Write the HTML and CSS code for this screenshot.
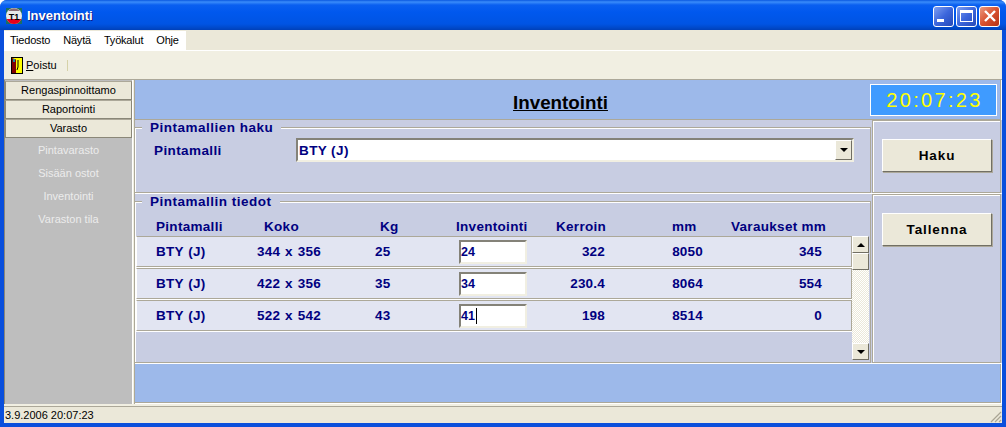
FILE: index.html
```html
<!DOCTYPE html>
<html lang="fi">
<head>
    <meta charset="UTF-8">
    <title>Inventointi</title>
    <link rel="stylesheet" href="styles.css">
</head>
<body>
<div class="window">
    <div class="titlebar">
        <svg class="app-icon" width="16" height="16" viewBox="0 0 16 16">
            <rect x="0" y="0" width="16" height="16" fill="#1c6e62"/>
            <circle cx="8" cy="8" r="8" fill="#e8e8e8"/>
            <path d="M0.6 11 H15.4 A8 8 0 0 1 0.6 11 Z" fill="#e8001c"/>
            <path d="M2 3 A8 8 0 0 1 14 3 Z" fill="#8a6a70"/>
            <text x="8" y="11.5" text-anchor="middle" class="app-icon-text">T1</text>
        </svg>
        <span class="title">Inventointi</span>
        <div class="win-buttons">
            <div class="win-btn"><span class="glyph-min"></span></div>
            <div class="win-btn"><span class="glyph-max"></span></div>
            <div class="win-btn win-close">
                <svg width="12" height="12" viewBox="0 0 12 12"><path d="M1 1 L11 11 M11 1 L1 11" stroke="#fff" stroke-width="2.4"/></svg>
            </div>
        </div>
    </div>

    <div class="client">
        <div class="menubar">
            <div class="menu">
                <span>Tiedosto</span><span>Näytä</span><span>Työkalut</span><span>Ohje</span>
            </div>
        </div>
        <div class="toolbar">
            <svg width="12" height="17" viewBox="0 0 12 17">
                <rect x="0.5" y="0.5" width="11" height="16" fill="#ffff00" stroke="#000"/>
                <path d="M1 1 L5 2.5 V16 H1 Z" fill="#800000"/>
                <rect x="2" y="2" width="2" height="3" fill="#1f8a9e"/>
                <path d="M7 3 V10 L6 13" stroke="#000" fill="none"/>
            </svg>
            <span class="tool-label"><u>P</u>oistu</span>
            <span class="tool-sep"></span>
        </div>

        <div class="workspace">
            <div class="sidebar">
                <div class="nav-btn">Rengaspinnoittamo</div>
                <div class="nav-btn">Raportointi</div>
                <div class="nav-btn">Varasto</div>
                <div class="nav-links">
                    <span>Pintavarasto</span>
                    <span>Sisään ostot</span>
                    <span>Inventointi</span>
                    <span>Varaston tila</span>
                </div>
            </div>

            <div class="main">
                <div class="header">
                    <h1>Inventointi</h1>
                    <div class="clock">20:07:23</div>
                </div>

                <div class="band band-search">
                    <fieldset class="group">
                        <legend>Pintamallien haku</legend>
                        <div class="search-row">
                            <label class="search-label">Pintamalli</label>
                            <div class="combo">
                                <span class="combo-value">BTY (J)</span>
                                <span class="arrow-btn"><i class="tri-down"></i></span>
                            </div>
                        </div>
                    </fieldset>
                    <div class="side-panel"><button class="action">Haku</button></div>
                </div>

                <div class="band band-details">
                    <fieldset class="group">
                        <legend>Pintamallin tiedot</legend>
                        <div class="grid-head">
                            <span>Pintamalli</span><span>Koko</span><span>Kg</span><span>Inventointi</span><span>Kerroin</span><span>mm</span><span>Varaukset mm</span>
                        </div>
                        <div class="grid-wrap">
                            <div class="rows">
                                <div class="row">
                                    <span>BTY (J)</span><span>344 x 356</span><span>25</span>
                                    <span class="qty">24</span>
                                    <span class="num">322</span><span class="num">8050</span><span class="num">345</span>
                                </div>
                                <div class="row">
                                    <span>BTY (J)</span><span>422 x 356</span><span>35</span>
                                    <span class="qty">34</span>
                                    <span class="num">230.4</span><span class="num">8064</span><span class="num">554</span>
                                </div>
                                <div class="row">
                                    <span>BTY (J)</span><span>522 x 542</span><span>43</span>
                                    <span class="qty">41<i class="caret"></i></span>
                                    <span class="num">198</span><span class="num">8514</span><span class="num">0</span>
                                </div>
                            </div>
                            <div class="scrollbar">
                                <span class="arrow-btn scroll-btn"><i class="tri-up"></i></span>
                                <span class="arrow-btn thumb"></span>
                                <span class="track"></span>
                                <span class="arrow-btn scroll-btn"><i class="tri-down"></i></span>
                            </div>
                        </div>
                    </fieldset>
                    <div class="side-panel"><button class="action">Tallenna</button></div>
                </div>

                <div class="footer-band"></div>
            </div>
        </div>

        <div class="statusbar">
            <span>3.9.2006 20:07:23</span>
            <svg class="grip" width="12" height="12" viewBox="0 0 12 12">
                <path d="M11 1 L1 11 M11 5 L5 11 M11 9 L9 11" stroke="#a9a594" stroke-width="1.2"/>
            </svg>
        </div>
    </div>
</div>
</body>
</html>
```

FILE: styles.css
```css
body {
    margin: 0;
    background: #fff;
    font-family: 'Liberation Sans', Arial, sans-serif;
    overflow: hidden;
}
.window {
    width: 1006px;
    height: 427px;
    display: flex;
    flex-direction: column;
    background: #0a4fdc;
    border-radius: 7px 7px 0 0;
    overflow: hidden;
}

/* title bar */
.titlebar {
    height: 30px;
    flex: none;
    display: flex;
    align-items: center;
    padding: 0 6px 0 6px;
    box-sizing: border-box;
    background: linear-gradient(to bottom, #0a58e0 0, #3a8cfa 2px, #0a5ff0 5px, #0058ee 12px, #0054e3 24px, #0048c8 28px, #0040b8 30px);
}
.app-icon {
    margin-top: 2px;
}
.app-icon-text {
    font-family: 'Liberation Sans', sans-serif;
    font-size: 9px;
    font-weight: bold;
    fill: #000;
}
.title {
    margin-left: 5px;
    color: #fff;
    font-size: 13px;
    font-weight: bold;
    text-shadow: 1px 1px 0 #0f1f8a;
}
.win-buttons {
    margin-left: auto;
    display: flex;
    gap: 2px;
    margin-top: 2px;
}
.win-btn {
    width: 21px;
    height: 21px;
    box-sizing: border-box;
    border: 1px solid #fff;
    border-radius: 3px;
    background: linear-gradient(135deg, #7f9ff0 0, #3c66dc 50%, #2448b8 100%);
    position: relative;
    display: flex;
    align-items: center;
    justify-content: center;
}
.win-close {
    background: linear-gradient(135deg, #eb9a80 0, #d8512f 50%, #b83214 100%);
}
.glyph-min {
    width: 7px;
    height: 3px;
    background: #fff;
    margin: 8px 6px 0 0;
}
.glyph-max {
    width: 11px;
    height: 8px;
    border: 1px solid #fff;
    border-top-width: 3px;
}

/* menu and toolbar */
.client {
    flex: 1;
    margin: 0 4px 4px;
    display: flex;
    flex-direction: column;
    background: #f1efe2;
    min-height: 0;
}
.menubar {
    height: 20px;
    flex: none;
    background: #ebe8d9;
    border-bottom: 1px solid #fff;
    box-sizing: content-box;
}
.menu {
    display: inline-flex;
    width: 182px;
    height: 19px;
    background: #fff;
    align-items: center;
    padding-left: 6px;
    box-sizing: border-box;
    font-size: 11px;
    letter-spacing: -0.2px;
    color: #000;
    gap: 13px;
}
.toolbar {
    height: 28px;
    flex: none;
    display: flex;
    align-items: center;
    padding-left: 7px;
    font-size: 11px;
}
.tool-label {
    margin-left: 3px;
}
.tool-sep {
    width: 1px;
    height: 11px;
    margin-left: 10px;
    background: #d6d2a8;
}

/* workspace */
.workspace {
    height: 325px;
    flex: none;
    display: flex;
    border-top: 1px solid #aca899;
    box-sizing: border-box;
}
.sidebar {
    width: 129px;
    flex: none;
    background: #bebebe;
    border-left: 1px solid #8a8778;
    border-right: 1px solid #fff;
    padding-top: 1px;
    box-sizing: border-box;
    display: flex;
    flex-direction: column;
}
.nav-btn {
    height: 19px;
    flex: none;
    box-sizing: border-box;
    background: #ebe8d9;
    border: 1px solid #8a8778;
    border-top-color: #aca899;
    font-size: 11px;
    line-height: 17px;
    text-align: center;
    color: #000;
}
.nav-links {
    display: flex;
    flex-direction: column;
    align-items: center;
    gap: 9px;
    padding-top: 5px;
    color: #ececec;
    font-size: 11px;
    line-height: 14px;
}
.main {
    flex: 1;
    margin-left: 1px;
    border-left: 1px solid #aca899;
    display: flex;
    flex-direction: column;
    background: #fff;
}
.header {
    height: 40px;
    flex: none;
    box-sizing: border-box;
    background: #9db9ea;
    border-bottom: 1px solid #aca899;
    border-right: 1px solid #aca899;
    position: relative;
    display: flex;
    align-items: center;
    justify-content: flex-end;
    padding-right: 3px;
    margin-right: 1px;
}
.header h1 {
    position: absolute;
    left: 0;
    right: 14px;
    margin: 0;
    padding-top: 6px;
    text-align: center;
    font-size: 18.8px;
    color: #000;
    text-decoration: underline;
}
.clock {
    width: 127px;
    height: 32px;
    box-sizing: border-box;
    background: #3f9bff;
    border: 1px solid #fff;
    color: #ffff00;
    font-size: 20px;
    letter-spacing: 2.3px;
    text-align: center;
    line-height: 30px;
    padding-left: 2px;
}

/* bands with group boxes */
.band {
    display: flex;
    background: #c8cde2;
    border-bottom: 1px solid #fff;
    flex: none;
}
.band-search {
    height: 73px;
}
.band-details {
    height: 169px;
}
.group {
    margin: 0;
    padding: 0;
    width: 736px;
    flex: none;
    box-sizing: border-box;
    border: 0;
    border-top: 1px solid #aca899;
    border-right: 1px solid #aca899;
    border-bottom: 1px solid #aca899;
    box-shadow: inset 1px 1px 0 #fff;
    min-width: 0;
}
.group legend {
    margin-left: 7px;
    padding: 0 8px;
    background: #c8cde2;
    color: #000080;
    font-size: 13.5px;
    font-weight: bold;
    line-height: 15px;
    letter-spacing: 0.5px;
}
.side-panel {
    flex: 1;
    margin: 0 1px 0 1px;
    box-sizing: border-box;
    border: 1px solid #aca899;
    padding: 18px 0 0 9px;
    box-shadow: inset 1px 1px 0 #fff;
}
.action {
    display: block;
    width: 110px;
    height: 33px;
    padding: 0;
    background: #ebe8d9;
    border: 1px solid;
    border-color: #fff #716f64 #716f64 #fff;
    box-shadow: 1px 1px 0 #aca899;
    font-family: inherit;
    font-size: 13.5px;
    font-weight: bold;
    color: #000;
    letter-spacing: 0.9px;
}

/* search row */
.search-row {
    display: flex;
    align-items: center;
    padding: 3px 0 0 19px;
}
.search-label {
    width: 142px;
    color: #000080;
    font-size: 13.5px;
    font-weight: bold;
    letter-spacing: 0.4px;
}
.combo {
    width: 558px;
    height: 24px;
    box-sizing: border-box;
    background: #fff;
    border: 2px solid;
    border-color: #848278 #f1efe2 #f1efe2 #848278;
    display: flex;
    align-items: center;
    justify-content: space-between;
    color: #000080;
    font-size: 13.5px;
    font-weight: bold;
    letter-spacing: 0.4px;
    padding: 0 0 0 1px;
}

/* small raised buttons */
.arrow-btn {
    display: flex;
    align-items: center;
    justify-content: center;
    box-sizing: border-box;
    width: 17px;
    height: 20px;
    flex: none;
    background: #ebe8d9;
    border: 1px solid;
    border-color: #fff #716f64 #716f64 #fff;
}
.tri-down, .tri-up {
    width: 0;
    height: 0;
    border-left: 4px solid transparent;
    border-right: 4px solid transparent;
}
.tri-down {
    border-top: 4px solid #000;
}
.tri-up {
    border-bottom: 4px solid #000;
}

/* data grid */
.grid-head {
    height: 27px;
    display: grid;
    grid-template-columns: 108px 116px 76px 100px 116px 59px 1fr;
    align-items: center;
    padding: 7px 0 0 21px;
    box-sizing: border-box;
    color: #000080;
    font-size: 13.5px;
    font-weight: bold;
    letter-spacing: 0.3px;
}
.grid-wrap {
    display: flex;
    height: 124px;
}
.rows {
    width: 716px;
    flex: none;
    margin-left: 1px;
}
.row {
    height: 31px;
    box-sizing: border-box;
    margin-bottom: 1px;
    display: grid;
    grid-template-columns: 101px 118px 84px 80px 66px 98px 119px;
    align-items: center;
    padding-left: 19px;
    background: #e2e5f2;
    border: 1px solid #aca899;
    border-left-color: #fff;
    box-shadow: 0 1px 0 #fff;
    color: #000080;
    font-size: 13.5px;
    font-weight: bold;
    letter-spacing: 0.2px;
    word-spacing: 1px;
}
.num {
    text-align: right;
}
.qty {
    width: 68px;
    height: 24px;
    box-sizing: border-box;
    background: #fff;
    border: 2px solid;
    border-color: #848278 #f1efe2 #f1efe2 #848278;
    line-height: 20px;
    font-size: 12.5px;
    letter-spacing: 0;
    display: flex;
    align-items: center;
}
.caret {
    width: 1px;
    height: 16px;
    background: #000;
    margin-left: 1px;
}
.scrollbar {
    width: 18px;
    flex: none;
    display: flex;
    flex-direction: column;
}
.scroll-btn {
    height: 17px;
    width: 17px;
}
.thumb {
    height: 17px;
    width: 17px;
}
.track {
    flex: 1;
    width: 17px;
    background: repeating-conic-gradient(#ebe8d9 0 25%, #fff 0 50%) 0 0 / 2px 2px;
}
.footer-band {
    height: 39px;
    flex: none;
    background: #9db9ea;
    border-right: 1px solid #aca899;
    border-bottom: 1px solid #aca899;
    margin-right: 1px;
    box-sizing: border-box;
}

/* status bar */
.statusbar {
    flex: 1;
    margin-top: 2px;
    background: #ebe8d9;
    border-top: 1px solid #aca899;
    display: flex;
    align-items: center;
    justify-content: space-between;
    padding-left: 1px;
    font-size: 11px;
    color: #000;
    box-sizing: border-box;
}
.grip {
    align-self: flex-end;
}
```
